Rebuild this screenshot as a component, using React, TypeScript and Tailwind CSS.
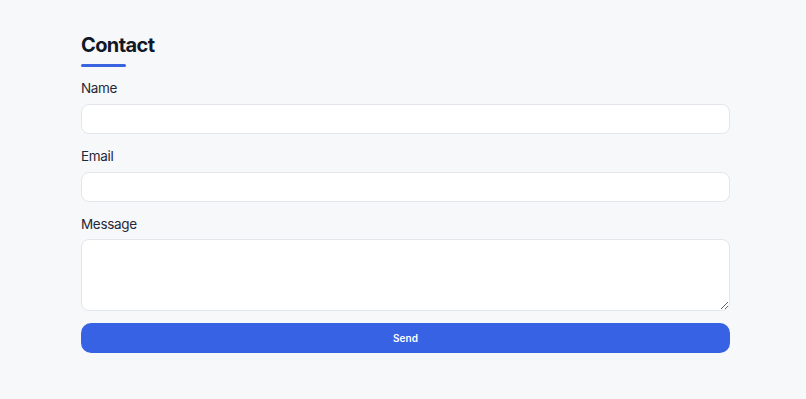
export default function App() {
  return (
    <div
      className="min-h-[399px] w-full bg-[#f7f8fa] text-[#111827]"
      style={{ fontFamily: "Inter, 'Noto Sans', sans-serif" }}
    >
      <div className="ml-[81px] w-[649px] pt-[31px]">
        <h1 className="text-[20px] font-bold leading-[28px] tracking-[-0.03em]">Contact</h1>
        <div className="mt-[5px] h-[3px] w-[45px] rounded-full bg-[#3a63e0]" />
        <form className="mt-[11px]" onSubmit={(e) => e.preventDefault()}>
          <div className="mb-[12px]">
            <label className="block text-[13.5px] leading-[20px] tracking-[-0.025em] text-[#1f2937]">Name</label>
            <input
              type="text"
              className="mt-[6px] block h-[30px] w-full rounded-lg border border-[#e3e6eb] bg-white px-3 text-sm outline-none"
            />
          </div>
          <div className="mb-[12px]">
            <label className="block text-[13.5px] leading-[20px] tracking-[-0.025em] text-[#1f2937]">Email</label>
            <input
              type="email"
              className="mt-[6px] block h-[30px] w-full rounded-lg border border-[#e3e6eb] bg-white px-3 text-sm outline-none"
            />
          </div>
          <div className="mb-[12px]">
            <label className="block text-[13.5px] leading-[20px] tracking-[-0.025em] text-[#1f2937]">Message</label>
            <textarea className="mt-[5px] block h-[72px] w-full rounded-lg border border-[#e3e6eb] bg-white px-3 py-2 text-sm outline-none" />
          </div>
          <button
            type="submit"
            className="block h-[30px] w-full rounded-[10px] bg-[#3762e3] text-[10px] font-semibold text-white"
          >
            Send
          </button>
        </form>
      </div>
    </div>
  );
}
